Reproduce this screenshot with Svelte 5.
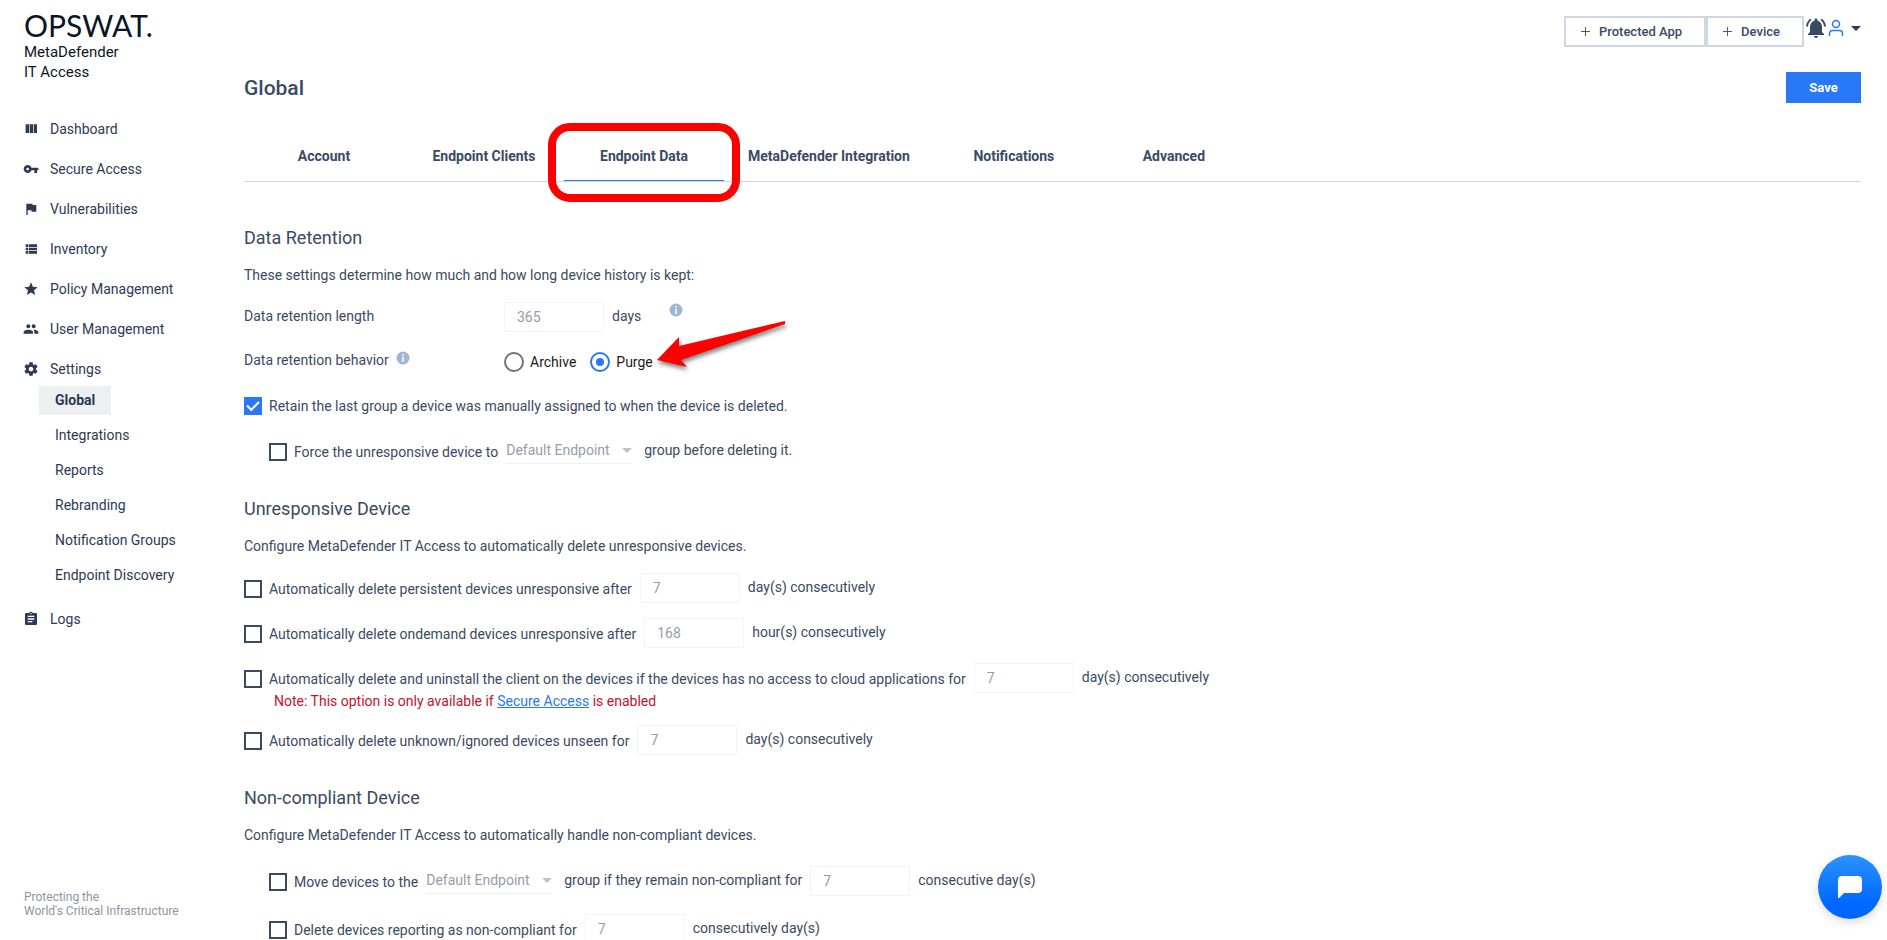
<script lang="ts">
	interface NavItem {
		label: string;
		icon: string;
		children?: string[];
	}

	const nav: NavItem[] = [
		{ label: 'Dashboard', icon: 'M10 18h5V5h-5v13zm-6 0h5V5H4v13zM16 5v13h5V5h-5z' },
		{
			label: 'Secure Access',
			icon: 'M12.65 10C11.83 7.67 9.61 6 7 6c-3.31 0-6 2.69-6 6s2.69 6 6 6c2.61 0 4.83-1.67 5.65-4H17v4h4v-4h2v-4H12.65zM7 14c-1.1 0-2-.9-2-2s.9-2 2-2 2 .9 2 2-.9 2-2 2z'
		},
		{ label: 'Vulnerabilities', icon: 'M14.4 6L14 4H5v17h2v-7h5.6l.4 2h7V6z' },
		{
			label: 'Inventory',
			icon: 'M4 14h4v-4H4v4zm0 5h4v-4H4v4zM4 9h4V5H4v4zm5 5h12v-4H9v4zm0 5h12v-4H9v4zM9 5v4h12V5H9z'
		},
		{
			label: 'Policy Management',
			icon: 'M12 17.27L18.18 21l-1.64-7.03L22 9.24l-7.19-.61L12 2 9.19 8.63 2 9.24l5.46 4.73L5.82 21z'
		},
		{
			label: 'User Management',
			icon: 'M16 11c1.66 0 2.99-1.34 2.99-3S17.66 5 16 5s-3 1.34-3 3 1.34 3 3 3zm-8 0c1.66 0 2.99-1.34 2.99-3S9.66 5 8 5 5 6.34 5 8s1.34 3 3 3zm0 2c-2.33 0-7 1.17-7 3.5V19h14v-2.500c0-2.330-4.670-3.500-7-3.500zm8 0c-.29 0-.62.02-.97.05 1.16.84 1.970 1.970 1.970 3.450V19h6v-2.500c0-2.330-4.670-3.500-7-3.500z'
		},
		{
			label: 'Settings',
			icon: 'M19.430 12.980c.04-.32.07-.64.07-.98s-.03-.66-.07-.98l2.110-1.650c.19-.15.24-.42.12-.64l-2-3.460c-.12-.22-.39-.3-.61-.22l-2.490 1c-.52-.4-1.080-.73-1.690-.98l-.38-2.650C14.460 2.180 14.250 2 14 2h-4c-.25 0-.46.18-.49.42l-.38 2.650c-.61.25-1.170.59-1.690.98l-2.490-1c-.23-.09-.49 0-.61.22l-2 3.460c-.13.22-.07.49.12.64l2.110 1.650c-.04.32-.07.65-.07.98s.03.66.07.98l-2.110 1.650c-.19.15-.24.42-.12.64l2 3.460c.12.22.39.3.61.22l2.490-1c.52.4 1.080.73 1.690.98l.38 2.650c.03.24.24.42.49.42h4c.25 0 .46-.18.49-.42l.38-2.650c.61-.25 1.170-.59 1.690-.98l2.490 1c.23.09.49 0 .61-.22l2-3.460c.12-.22.07-.49-.12-.64l-2.110-1.650zM12 15.500c-1.930 0-3.500-1.570-3.500-3.500s1.570-3.500 3.500-3.500 3.500 1.570 3.500 3.500-1.570 3.500-3.500 3.500z',
			children: [
				'Global',
				'Integrations',
				'Reports',
				'Rebranding',
				'Notification Groups',
				'Endpoint Discovery'
			]
		},
		{
			label: 'Logs',
			icon: 'M19 3h-4.180C14.400 1.840 13.300 1 12 1c-1.300 0-2.400.84-2.820 2H5c-1.100 0-2 .9-2 2v14c0 1.100.9 2 2 2h14c1.100 0 2-.9 2-2V5c0-1.100-.9-2-2-2zm-7 0c.55 0 1 .45 1 1s-.45 1-1 1-1-.45-1-1 .45-1 1-1zm2 14H7v-2h7v2zm3-4H7v-2h10v2zm0-4H7V7h10v2z'
		}
	];

	const tabs = [
		'Account',
		'Endpoint Clients',
		'Endpoint Data',
		'MetaDefender Integration',
		'Notifications',
		'Advanced'
	];

	let activeTab = $state('Endpoint Data');
	let activePage = $state('Global');
	let behavior = $state('purge');
	let retainGroup = $state(true);
</script>

{#snippet info()}
	<svg class="info" viewBox="0 0 14 14" role="img" aria-label="More information">
		<circle cx="7" cy="7" r="6.5" fill="#9fb5d1" />
		<path d="M6.200 3h1.600v1.600H6.200zM6.200 5.800h1.600V11H6.200z" fill="#fff" />
	</svg>
{/snippet}

{#snippet check(id: string, text: string)}
	<label class="check" for={id}>
		<input type="checkbox" {id} />
		{text}
	</label>
{/snippet}

{#snippet amount(value: string, label: string)}
	<input class="amount" type="text" {value} aria-label={label} disabled />
{/snippet}

{#snippet group(label: string)}
	<span class="select">
		<select aria-label={label} disabled>
			<option>Default Endpoint</option>
		</select>
	</span>
{/snippet}

<div class="app">
	<aside class="sidebar">
		<div class="logo">OPSWAT.</div>
		<div class="product">MetaDefender<br />IT Access</div>

		<nav>
			<ul class="menu">
				{#each nav as item (item.label)}
					<li>
						<a class="menu-link" href="#{item.label}">
							<svg viewBox="0 0 24 24" aria-hidden="true"><path d={item.icon} /></svg>
							{item.label}
						</a>
						{#if item.children}
							<ul class="submenu">
								{#each item.children as child (child)}
									<li>
										<a
											href="#{child}"
											class:current={activePage === child}
											onclick={() => (activePage = child)}>{child}</a
										>
									</li>
								{/each}
							</ul>
						{/if}
					</li>
				{/each}
			</ul>
		</nav>

		<div class="tagline">Protecting the<br />World's Critical Infrastructure</div>
	</aside>

	<main>
		<header class="topbar">
			<button class="add" type="button">
				<svg viewBox="0 0 10 10" aria-hidden="true"><path d="M5 0v10M0 5h10" /></svg>
				Protected App
			</button>
			<button class="add" type="button">
				<svg viewBox="0 0 10 10" aria-hidden="true"><path d="M5 0v10M0 5h10" /></svg>
				Device
			</button>
			<button class="icon-button bell" type="button" aria-label="Notifications">
				<svg viewBox="0 0 24 24" width="24" height="24">
					<path
						d="M7.580 4.080L6.150 2.650C3.750 4.480 2.170 7.300 2.030 10.500h2c.15-2.650 1.510-4.970 3.550-6.420zm12.390 6.420h2c-.15-3.200-1.730-6.020-4.120-7.850l-1.420 1.430c2.020 1.450 3.390 3.770 3.540 6.420zM18 11c0-3.070-1.640-5.640-4.500-6.320V4c0-.83-.67-1.500-1.500-1.500s-1.500.67-1.500 1.500v.68C7.630 5.360 6 7.920 6 11v5l-2 2v1h16v-1l-2-2v-5zm-6 11c.14 0 .27-.01.4-.04.65-.14 1.180-.58 1.440-1.180.1-.24.15-.5.15-.78h-4c.01 1.100.9 2 2.010 2z"
					/>
				</svg>
			</button>
			<button class="icon-button user" type="button" aria-label="User menu">
				<svg viewBox="0 0 16 18" width="16" height="18">
					<circle cx="8" cy="5" r="3.500" />
					<path d="M1.500 17v-2.500a3 3 0 0 1 3-3h7a3 3 0 0 1 3 3V17" />
				</svg>
				<span class="caret"></span>
			</button>
		</header>

		<div class="heading">
			<h1>Global</h1>
			<button class="save" type="button">Save</button>
		</div>

		<div class="tabs" role="tablist">
			{#each tabs as tab (tab)}
				<button
					type="button"
					role="tab"
					aria-selected={activeTab === tab}
					class:active={activeTab === tab}
					onclick={() => (activeTab = tab)}
				>
					{tab}
					{#if tab === 'Endpoint Data'}<span class="callout"></span>{/if}
				</button>
			{/each}
		</div>

		<section class="first">
			<h2>Data Retention</h2>
			<p>These settings determine how much and how long device history is kept:</p>
			<div class="rows retention">
				<div class="row">
					<label class="name" for="length">Data retention length</label>
					<input id="length" class="amount" type="text" value="365" disabled />
					<span class="unit">days</span>
					<span class="hint">{@render info()}</span>
				</div>
				<div class="row">
					<span class="name" id="behavior-label">Data retention behavior {@render info()}</span>
					<div class="radios" role="radiogroup" aria-labelledby="behavior-label">
						<label for="archive">
							<input type="radio" id="archive" value="archive" bind:group={behavior} />
							Archive
						</label>
						<label for="purge">
							<input type="radio" id="purge" value="purge" bind:group={behavior} />
							Purge
							<svg class="arrow" viewBox="0 0 140 60" width="140" height="60" aria-hidden="true">
								<path d="M4 45L26 22v9L132 6v3L28 45l6 7z" />
							</svg>
						</label>
					</div>
				</div>
				<div class="row">
					<label class="check" for="retain">
						<input type="checkbox" id="retain" bind:checked={retainGroup} />
						Retain the last group a device was manually assigned to when the device is deleted.
					</label>
				</div>
				<div class="row child">
					{@render check('force', 'Force the unresponsive device to')}
					{@render group('Group for unresponsive device')}
					<span class="unit">group before deleting it.</span>
				</div>
			</div>
		</section>

		<section>
			<h2>Unresponsive Device</h2>
			<p>Configure MetaDefender IT Access to automatically delete unresponsive devices.</p>
			<div class="rows">
				<div class="row">
					{@render check('persistent', 'Automatically delete persistent devices unresponsive after')}
					{@render amount('7', 'Days for persistent devices')}
					<span class="unit">day(s) consecutively</span>
				</div>
				<div class="row">
					{@render check('ondemand', 'Automatically delete ondemand devices unresponsive after')}
					{@render amount('168', 'Hours for ondemand devices')}
					<span class="unit">hour(s) consecutively</span>
				</div>
				<div>
					<div class="row">
						{@render check(
							'uninstall',
							'Automatically delete and uninstall the client on the devices if the devices has no access to cloud applications for'
						)}
						{@render amount('7', 'Days without cloud access')}
						<span class="unit">day(s) consecutively</span>
					</div>
					<div class="note">
						Note: This option is only available if <a href="#Secure Access">Secure Access</a> is enabled
					</div>
				</div>
				<div class="row">
					{@render check('unknown', 'Automatically delete unknown/ignored devices unseen for')}
					{@render amount('7', 'Days unseen')}
					<span class="unit">day(s) consecutively</span>
				</div>
			</div>
		</section>

		<section>
			<h2>Non-compliant Device</h2>
			<p>Configure MetaDefender IT Access to automatically handle non-compliant devices.</p>
			<div class="rows noncompliant">
				<div class="row">
					{@render check('move', 'Move devices to the')}
					{@render group('Group for non-compliant devices')}
					<span class="unit">group if they remain non-compliant for</span>
					{@render amount('7', 'Days before moving')}
					<span class="unit">consecutive day(s)</span>
				</div>
				<div class="row">
					{@render check('delete', 'Delete devices reporting as non-compliant for')}
					{@render amount('7', 'Days before deleting')}
					<span class="unit">consecutively day(s)</span>
				</div>
			</div>
		</section>
	</main>

	<button class="chat" type="button" aria-label="Open chat">
		<svg viewBox="0 0 24 22" width="24" height="22">
			<path d="M4 0h16q4 0 4 4v9q0 4-4 4H6l-5 5H0V4q0-4 4-4z" />
		</svg>
	</button>
</div>

<style>
	:global(body) {
		background: #fff;
	}

	.app {
		display: flex;
		height: 100vh;
		overflow: hidden;
		font: 14px/20px Roboto, 'Liberation Sans', sans-serif;
		color: #3a4a63;
	}

	.app button,
	.app input,
	.app select {
		font-family: inherit;
		margin: 0;
	}

	.sidebar {
		display: flex;
		flex-direction: column;
		flex: 0 0 244px;
		box-sizing: border-box;
		padding: 8px 0 22px 24px;
	}

	.logo {
		font: 30px/34px Lato, sans-serif;
		color: #0b1527;
	}

	.product {
		font-size: 15px;
		color: #0b1527;
	}

	.menu,
	.submenu {
		list-style: none;
		margin: 0;
		padding: 0;
	}

	.menu {
		margin-top: 27px;
	}

	.menu a {
		color: #2b3a55;
		text-decoration: none;
	}

	.menu-link {
		display: flex;
		align-items: center;
		gap: 11px;
		height: 40px;
	}

	.menu-link svg {
		width: 16px;
		height: 16px;
		fill: currentColor;
		margin-left: -1px;
	}

	.submenu {
		margin: -6px 0 6px 15px;
	}

	.submenu li {
		display: flex;
		align-items: center;
		height: 35px;
	}

	.submenu a {
		padding: 0 16px;
		line-height: 29px;
	}

	.submenu .current {
		background: #eeeff1;
		font-weight: 700;
	}

	.tagline {
		margin-top: auto;
		font-size: 12px;
		line-height: 14px;
		color: #8e959e;
	}

	main {
		flex: 1;
		min-width: 0;
		padding: 16px 26px 0 0;
		overflow-y: auto;
		scrollbar-width: none;
	}

	.topbar {
		display: flex;
		justify-content: flex-end;
		height: 31px;
	}

	.add {
		display: flex;
		align-items: center;
		gap: 9px;
		margin-right: 8px;
		padding: 0 22px 0 15px;
		border: 2px solid #d0d7e4;
		background: #fff;
		color: #3a4a63;
		font-size: 13px;
		font-weight: 500;
	}

	.add svg {
		width: 9px;
		height: 9px;
		stroke: currentColor;
	}

	.icon-button {
		display: flex;
		padding: 0;
		border: 0;
		background: none;
	}

	.bell {
		margin-left: 7px;
		margin-top: -2px;
	}

	.bell svg {
		fill: #3a4a63;
	}

	.user {
		align-items: center;
		gap: 7px;
		height: 24px;
		margin: 0 2px 0 92px;
	}

	.user svg {
		fill: none;
		stroke: #2878f8;
		stroke-width: 1.5;
	}

	.caret {
		border: 5px solid transparent;
		border-top-color: #2b3a55;
		border-bottom: 0;
	}

	.heading {
		display: flex;
		justify-content: space-between;
		align-items: center;
		margin-top: 25px;
		height: 31px;
	}

	h1 {
		margin: 0;
		font-size: 21px;
		line-height: 28px;
		font-weight: 500;
	}

	.save {
		width: 75px;
		height: 31px;
		border: 0;
		background: #2878f8;
		color: #fff;
		font-size: 13px;
		font-weight: 700;
	}

	.tabs {
		display: flex;
		margin-top: 28px;
		border-bottom: 1px solid #d0d7e4;
	}

	.tabs button {
		position: relative;
		min-width: 160px;
		height: 50px;
		padding: 0 24px;
		border: 0;
		border-bottom: 1px solid transparent;
		background: none;
		color: #3a4a63;
		font-size: 14px;
		font-weight: 700;
	}

	.tabs .active {
		border-bottom-color: #2878f8;
	}

	.callout {
		position: absolute;
		inset: -8px -16px -22px;
		border: 8px solid #f00;
		border-radius: 22px;
		z-index: 1;
		pointer-events: none;
	}

	section {
		margin-top: 31px;
	}

	.first {
		margin-top: 44px;
	}

	h2 {
		margin: 0 0 15px;
		font-size: 18px;
		line-height: 24px;
		font-weight: 400;
	}

	p {
		margin: 0 0 17px;
	}

	.rows {
		display: flex;
		flex-direction: column;
		gap: 15px;
	}

	.retention {
		gap: 14px;
	}

	.noncompliant {
		gap: 18px;
		margin-top: 21px;
		margin-left: 25px;
	}

	.row {
		display: flex;
		align-items: flex-start;
		gap: 8px;
		height: 30px;
		white-space: nowrap;
	}

	.child {
		margin: 2px 0 0 25px;
	}

	.name {
		width: 252px;
		padding-top: 4px;
	}

	.info {
		width: 14px;
		height: 14px;
		margin-left: 4px;
	}

	.hint {
		margin-left: 16px;
	}

	.unit {
		padding-top: 4px;
	}

	.amount {
		box-sizing: border-box;
		width: 100px;
		height: 30px;
		padding: 0 12px;
		border: 1px solid #f3f4f6;
		background: #fff;
		color: #959daa;
		font-size: 14px;
	}

	.check {
		display: flex;
		gap: 7px;
		padding-top: 6px;
	}

	.check input {
		appearance: none;
		box-sizing: border-box;
		display: grid;
		place-content: center;
		width: 18px;
		height: 18px;
		margin-top: 1px;
		border: 2px solid #3a4a63;
	}

	.check input:checked {
		border-color: #2878f8;
		background: #2878f8;
	}

	.check input:checked::before {
		content: '';
		width: 10px;
		height: 5px;
		border: solid #fff;
		border-width: 0 0 2px 2px;
		transform: translateY(-2px) rotate(-45deg);
	}

	.select {
		position: relative;
	}

	.select::after {
		content: '';
		position: absolute;
		right: 0;
		top: 12px;
		border: 5px solid transparent;
		border-top-color: #bfc3c9;
		border-bottom: 0;
	}

	select {
		appearance: none;
		width: 126px;
		height: 28px;
		padding: 0;
		border: 0;
		border-bottom: 1px solid #f0f1f3;
		background: none;
		color: #959daa;
		font-size: 14px;
		opacity: 1;
	}

	.select + .unit {
		margin-left: 4px;
	}

	.radios {
		display: flex;
		gap: 14px;
		margin-left: -8px;
		padding: 6px 0 0 8px;
		color: #1c1c1c;
	}

	.radios label {
		position: relative;
		display: flex;
		gap: 6px;
	}

	.radios input {
		appearance: none;
		box-sizing: border-box;
		display: grid;
		place-content: center;
		width: 20px;
		height: 20px;
		border: 2px solid #737373;
		border-radius: 50%;
	}

	.radios input:checked {
		border-color: #2878f8;
	}

	.radios input:checked::before {
		content: '';
		width: 8px;
		height: 8px;
		border-radius: 50%;
		background: #2878f8;
	}

	.arrow {
		position: absolute;
		left: 100%;
		top: -37px;
		fill: #f00;
		filter: drop-shadow(1px 3px 2px rgb(0 0 0 / 0.5));
	}

	.note {
		margin-left: 30px;
		line-height: 17px;
		color: #c8102e;
	}

	.note a {
		color: #2878f8;
	}

	.chat {
		position: fixed;
		right: 5px;
		bottom: 21px;
		display: grid;
		place-content: center;
		width: 64px;
		height: 64px;
		border: 0;
		border-radius: 50%;
		background: linear-gradient(#2b93ff, #0068ff 75%);
		box-shadow: 0 3px 10px rgb(0 0 0 / 0.15);
	}

	.chat svg {
		fill: #fff;
	}
</style>
